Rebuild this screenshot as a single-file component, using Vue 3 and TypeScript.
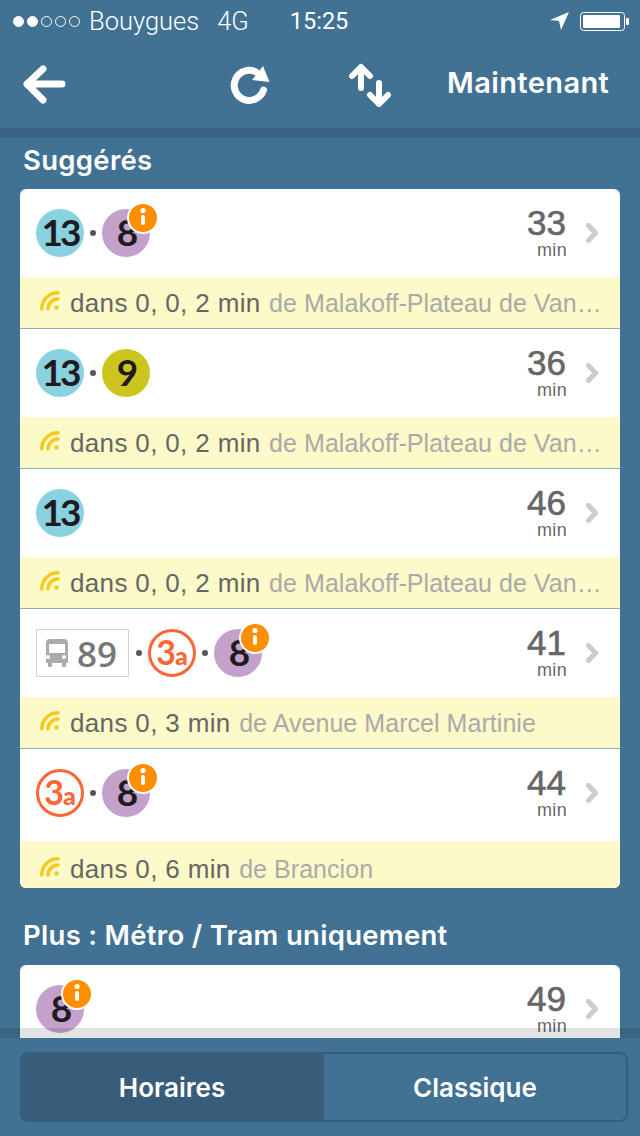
<script setup lang="ts">
type Line = { kind: 'metro' | 'tram' | 'bus'; label: string; color?: string; info?: boolean }
type Route = { lines: Line[]; mins: number; wait?: string; from?: string }

const m13: Line = { kind: 'metro', label: '13', color: '#89d3e0' }
const m8: Line = { kind: 'metro', label: '8', color: '#c4a1cb', info: true }
const m9: Line = { kind: 'metro', label: '9', color: '#cdc51f' }
const t3a: Line = { kind: 'tram', label: '3' }
const b89: Line = { kind: 'bus', label: '89' }

const suggested: Route[] = [
  { lines: [m13, m8], mins: 33, wait: 'dans 0, 0, 2 min', from: 'de Malakoff-Plateau de Van…' },
  { lines: [m13, m9], mins: 36, wait: 'dans 0, 0, 2 min', from: 'de Malakoff-Plateau de Van…' },
  { lines: [m13], mins: 46, wait: 'dans 0, 0, 2 min', from: 'de Malakoff-Plateau de Van…' },
  { lines: [b89, t3a, m8], mins: 41, wait: 'dans 0, 3 min', from: 'de Avenue Marcel Martinie' },
  { lines: [t3a, m8], mins: 44, wait: 'dans 0, 6 min', from: 'de Brancion' },
]

const more: Route[] = [{ lines: [m8], mins: 49 }]
const groups = [
  { title: 'Suggérés', routes: suggested },
  { title: 'Plus : Métro / Tram uniquement', routes: more },
]
</script>

<template>
  <div class="screen">
    <header class="top">
      <div class="status">
        <span class="signal">
          <i v-for="n in 5" :key="n" :class="{ on: n < 3 }"></i>
        </span>
        <span class="carrier">Bouygues</span>
        <span class="network">4G</span>
        <span class="clock">15:25</span>
        <svg class="locate" viewBox="550 11 20 20" aria-hidden="true">
          <polygon points="569,12 550,20 559,21 561,30" />
        </svg>
        <svg class="battery" viewBox="580 10 50 21" aria-hidden="true">
          <rect class="shell" x="580.5" y="11.5" width="44" height="18" rx="3" />
          <rect x="583" y="14" width="37" height="13" rx="1" />
          <rect x="626" y="17" width="3" height="7" rx="1" />
        </svg>
      </div>
      <nav class="nav">
        <svg class="ic back" viewBox="20 60 48 48" aria-hidden="true">
          <path d="M62 84H27M43 69 27 84l16 16" />
        </svg>
        <svg class="ic reload" viewBox="228 62 44 44" aria-hidden="true">
          <path d="M256 72A15 15 0 1 0 263.500 90" />
          <polygon class="solid" points="263,66 269.500,82 252,80" />
        </svg>
        <svg class="ic swap" viewBox="346 60 46 46" aria-hidden="true">
          <path class="thin" d="M361 87V66M352 75l9-9 9 9M379 82v21M370 94l9 9 9-9" />
        </svg>
        <span class="when">Maintenant</span>
      </nav>
    </header>

    <div class="rule"></div>

    <main class="list">
      <section v-for="group in groups" :key="group.title" class="group">
        <h2>{{ group.title }}</h2>
        <div class="card">
          <article v-for="route in group.routes" :key="route.mins" class="route">
            <div class="main">
              <div class="lines">
                <template v-for="(line, i) in route.lines" :key="i">
                  <span v-if="i > 0" class="sep"></span>
                  <span v-if="line.kind === 'bus'" class="bus">
                    <svg viewBox="0 0 22 28" aria-hidden="true">
                      <path d="M4 0h14q4 0 4 4v19q0 1-1 1h-1v3q0 1-1 1h-2q-1 0-1-1v-3H6v3q0 1-1 1H3q-1 0-1-1v-3H1q-1 0-1-1V4q0-4 4-4zM3 5v9h16V5zM4 18a2 2 0 1 0 0 .1zM20 18a2 2 0 1 0 0 .1z" fill-rule="evenodd" />
                    </svg>
                    {{ line.label }}
                  </span>
                  <span v-else-if="line.kind === 'tram'" class="tram">{{ line.label }}<small>a</small></span>
                  <span v-else class="metro" :style="{ background: line.color }">
                    {{ line.label }}
                    <svg v-if="line.info" class="info" viewBox="0 0 32 32" aria-hidden="true">
                      <circle cx="16" cy="16" r="16" fill="#fff" />
                      <circle cx="16" cy="16" r="14" fill="#ff8f00" />
                      <circle cx="16" cy="8.500" r="2.600" fill="#fff" />
                      <rect x="14" y="13" width="4" height="10" rx="2" fill="#fff" />
                    </svg>
                  </span>
                </template>
              </div>
              <div class="time">
                <strong>{{ route.mins }}</strong>
                <span>min</span>
              </div>
              <svg class="chev" viewBox="0 0 12 20" aria-hidden="true">
                <path d="M2.500 2.500 9.500 10l-7 7.500" />
              </svg>
            </div>
            <div v-if="route.wait" class="live">
              <svg viewBox="0 0 20 20" aria-hidden="true">
                <path d="M1.800 18A16 16 0 0 1 18 1.800M8 18A10 10 0 0 1 18 8" />
                <circle cx="16.500" cy="16.500" r="2.200" />
              </svg>
              <p><span>{{ route.wait }}</span> <em>{{ route.from }}</em></p>
            </div>
          </article>
        </div>
      </section>
    </main>

    <footer class="foot">
      <div class="seg">
        <button class="active" type="button">Horaires</button>
        <button type="button">Classique</button>
      </div>
    </footer>
  </div>
</template>

<style>
html,
body {
  margin: 0;
  background: #417193;
}
</style>

<style scoped>
.screen {
  width: 640px;
  height: 1136px;
  display: flex;
  flex-direction: column;
  overflow: hidden;
  background: #417193;
  color: #fff;
  font-family: 'Liberation Sans', Arial, sans-serif;
}

.top {
  flex-shrink: 0;
}

.status {
  height: 40px;
  padding: 2px 0 0 13px;
  box-sizing: border-box;
  display: flex;
  align-items: center;
  font-family: Roboto, 'Liberation Sans', sans-serif;
  font-weight: 300;
  font-size: 25.500px;
}

.signal {
  display: flex;
  gap: 3px;
  width: 76px;
}

.signal i {
  width: 11px;
  height: 11px;
  box-sizing: border-box;
  border: 1px solid #fff;
  border-radius: 50%;
}

.signal i.on {
  background: #fff;
}

.network {
  margin-left: 18px;
}

.clock {
  margin-left: 41px;
  font-size: 23.500px;
  font-weight: 400;
}

.locate {
  width: 20px;
  height: 20px;
  margin-left: auto;
  fill: #fff;
}

.battery {
  width: 50px;
  height: 21px;
  margin: 0 10px 0 10px;
  fill: #fff;
}

.battery .shell {
  fill: none;
  stroke: #fff;
}

.nav {
  height: 88px;
  display: flex;
  align-items: center;
  padding-left: 20px;
}

.ic {
  fill: none;
  stroke: #fff;
  stroke-width: 7;
  stroke-linecap: round;
  stroke-linejoin: round;
  flex-shrink: 0;
}

.ic .solid {
  fill: #fff;
  stroke: none;
}

.ic .thin {
  stroke-width: 6;
}

.back {
  width: 48px;
  height: 48px;
}

.reload {
  width: 44px;
  height: 44px;
  margin-left: 160px;
}

.swap {
  width: 46px;
  height: 46px;
  margin-left: 74px;
}

.when {
  margin: 0 0 3px 55px;
  font-family: Inter, sans-serif;
  font-weight: 600;
  font-size: 29px;
  letter-spacing: 0.4px;
}

.rule {
  height: 10px;
  flex-shrink: 0;
  background: #3b6484;
}

.list {
  flex: 1;
  min-height: 0;
  overflow: hidden;
  padding: 0 20px;
}

.group h2 {
  margin: 0;
  height: 51px;
  padding: 0 0 8px 3px;
  box-sizing: border-box;
  display: flex;
  align-items: center;
  font-family: Inter, sans-serif;
  font-weight: 600;
  font-size: 27.500px;
  letter-spacing: 0.3px;
}

.group + .group h2 {
  height: 77px;
  padding: 17px 0 0 3px;
}

.card {
  background: #fff;
  border-radius: 6px;
  overflow: hidden;
}

.route + .route {
  border-top: 1px solid #8fb0ad;
}

.main {
  height: 88px;
  display: flex;
  align-items: center;
  padding: 0 22px 0 16px;
}

.route:last-child .main {
  height: 92px;
  padding-bottom: 4px;
  box-sizing: border-box;
}

.route:not(:first-child) .main {
  height: 88px;
}

.route:not(:first-child):last-child .main {
  height: 92px;
}

.lines {
  flex: 1;
  display: flex;
  align-items: center;
}

.sep {
  width: 6px;
  height: 6px;
  margin: 0 6px;
  border-radius: 50%;
  background: #555;
}

.metro {
  position: relative;
  width: 48px;
  height: 48px;
  box-sizing: border-box;
  padding-bottom: 3px;
  border-radius: 50%;
  display: flex;
  align-items: center;
  justify-content: center;
  color: #1f1b1f;
  font-family: Lato, sans-serif;
  font-weight: 700;
  font-size: 37px;
  letter-spacing: -3px;
}

.info {
  position: absolute;
  top: -7px;
  right: -9px;
  width: 32px;
  height: 32px;
}

.tram {
  width: 48px;
  height: 48px;
  box-sizing: border-box;
  padding-bottom: 2px;
  border: 3px solid #ff6633;
  border-radius: 50%;
  display: flex;
  align-items: baseline;
  justify-content: center;
  line-height: 40px;
  color: #ff6633;
  font-family: Lato, sans-serif;
  font-weight: 700;
  font-size: 34px;
}

.tram small {
  font-size: 25px;
  font-weight: 900;
  margin-left: -1px;
}

.bus {
  width: 93px;
  height: 48px;
  box-sizing: border-box;
  margin-right: 1px;
  border: 1px solid #d5d5c8;
  display: flex;
  align-items: center;
  gap: 9px;
  padding-left: 9px;
  color: #777;
  font-family: 'Open Sans', sans-serif;
  font-weight: 600;
  font-size: 35px;
}

.bus svg {
  width: 22px;
  height: 28px;
  fill: #aaa;
}

.time {
  display: flex;
  flex-direction: column;
  align-items: flex-end;
  padding-bottom: 2px;
  color: #666;
}

.time strong {
  font-weight: 400;
  font-size: 35px;
  line-height: 36px;
  margin-right: 1px;
  -webkit-text-stroke: 0.6px #666;
}

.time span {
  font-size: 18px;
  line-height: 18px;
  letter-spacing: 0.35px;
}

.chev {
  width: 12px;
  height: 20px;
  margin: 0 0 0 19px;
  fill: none;
  stroke: #ccc;
  stroke-width: 5;
  stroke-linecap: round;
  stroke-linejoin: round;
}

.live {
  height: 51px;
  display: flex;
  align-items: center;
  padding: 0 20px;
  background: #fbfac8;
}

.route:last-child .live {
  height: 47px;
  padding-top: 8px;
  box-sizing: border-box;
}

.live svg {
  width: 20px;
  height: 20px;
  flex-shrink: 0;
  margin: -4px 10px 0 0;
  fill: #f5ca20;
  stroke: none;
}

.live svg path {
  fill: none;
  stroke: #f5ca20;
  stroke-width: 3.500;
  stroke-linecap: round;
}

.live p {
  flex: 1;
  min-width: 0;
  margin: 2px 0 0;
  font-size: 25px;
  letter-spacing: 0.05px;
  white-space: nowrap;
  color: #aaa;
}

.live p span {
  color: #666;
  font-size: 26px;
  letter-spacing: 0.35px;
}

.live p em {
  font-style: normal;
  margin-left: 1.500px;
}

.foot {
  position: relative;
  flex-shrink: 0;
  height: 98px;
  padding: 14px 12px 14px 20px;
  box-sizing: border-box;
  background: #417193;
}

.foot::before {
  content: '';
  position: absolute;
  left: 0;
  right: 0;
  top: -10px;
  height: 10px;
  background: rgba(0, 0, 0, 0.11);
}

.seg {
  height: 70px;
  display: flex;
  box-sizing: border-box;
  border: 2px solid #375d7b;
  border-radius: 8px;
  overflow: hidden;
}

.seg button {
  flex: 1;
  border: 0;
  padding: 0;
  background: transparent;
  color: #fff;
  font-family: Inter, sans-serif;
  font-weight: 600;
  font-size: 26px;
}

.seg button.active {
  flex: 0 0 302px;
  padding-right: 2px;
  background: #375d7b;
}
</style>
